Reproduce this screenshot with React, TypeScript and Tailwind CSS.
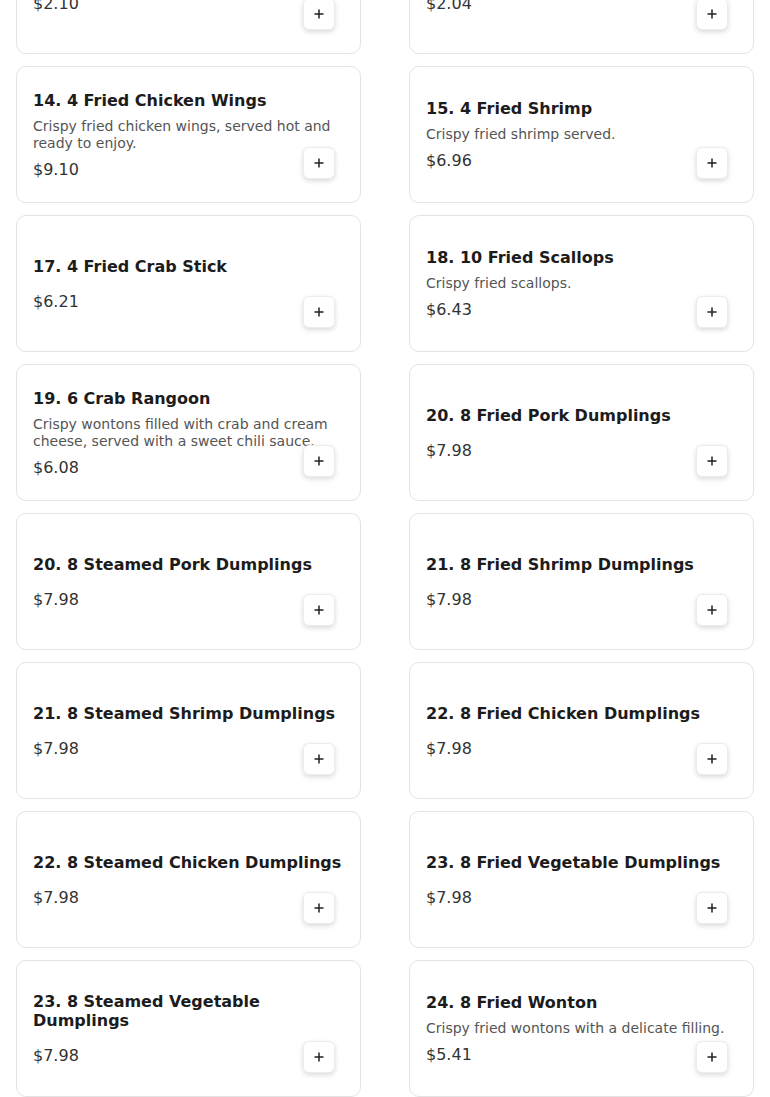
type Item = {
  name: string;
  desc?: string;
  price: string;
};

const items: Item[] = [
  { name: "12. 2 Egg Rolls", price: "$2.10" },
  { name: "13. 2 Spring Rolls", price: "$2.04" },
  {
    name: "14. 4 Fried Chicken Wings",
    desc: "Crispy fried chicken wings, served hot and ready to enjoy.",
    price: "$9.10",
  },
  { name: "15. 4 Fried Shrimp", desc: "Crispy fried shrimp served.", price: "$6.96" },
  { name: "17. 4 Fried Crab Stick", price: "$6.21" },
  { name: "18. 10 Fried Scallops", desc: "Crispy fried scallops.", price: "$6.43" },
  {
    name: "19. 6 Crab Rangoon",
    desc: "Crispy wontons filled with crab and cream cheese, served with a sweet chili sauce.",
    price: "$6.08",
  },
  { name: "20. 8 Fried Pork Dumplings", price: "$7.98" },
  { name: "20. 8 Steamed Pork Dumplings", price: "$7.98" },
  { name: "21. 8 Fried Shrimp Dumplings", price: "$7.98" },
  { name: "21. 8 Steamed Shrimp Dumplings", price: "$7.98" },
  { name: "22. 8 Fried Chicken Dumplings", price: "$7.98" },
  { name: "22. 8 Steamed Chicken Dumplings", price: "$7.98" },
  { name: "23. 8 Fried Vegetable Dumplings", price: "$7.98" },
  { name: "23. 8 Steamed Vegetable Dumplings", price: "$7.98" },
  {
    name: "24. 8 Fried Wonton",
    desc: "Crispy fried wontons with a delicate filling.",
    price: "$5.41",
  },
];

function PlusIcon() {
  return (
    <svg width="10" height="10" viewBox="0 0 10 10" fill="none">
      <path d="M5 0.5v9M0.5 5h9" stroke="#222" strokeWidth="1.5" />
    </svg>
  );
}

function MenuCard({ item }: { item: Item }) {
  return (
    <div className="relative flex h-[137px] flex-col justify-center gap-2 rounded-[10px] border border-[#e3e3e3] bg-white px-4">
      <h3 className="text-base font-bold leading-[normal] text-[#1c1c1c]">{item.name}</h3>
      <p className="line-clamp-2 text-sm leading-[17px] text-[#555]">{item.desc}</p>
      <p className="text-base leading-[normal] text-[#333]">{item.price}</p>
      <button className="absolute bottom-[23px] right-[25px] flex h-8 w-8 items-center justify-center rounded-md border border-[#ececec] bg-white shadow-[0_2px_5px_rgba(0,0,0,0.15)]">
        <PlusIcon />
      </button>
    </div>
  );
}

export default function App() {
  return (
    <main className="min-h-screen bg-white px-4 font-['DejaVu_Sans',sans-serif]">
      <div className="mt-[-83px] grid grid-cols-2 gap-x-12 gap-y-3">
        {items.map((item, i) => (
          <MenuCard key={i} item={item} />
        ))}
      </div>
    </main>
  );
}
